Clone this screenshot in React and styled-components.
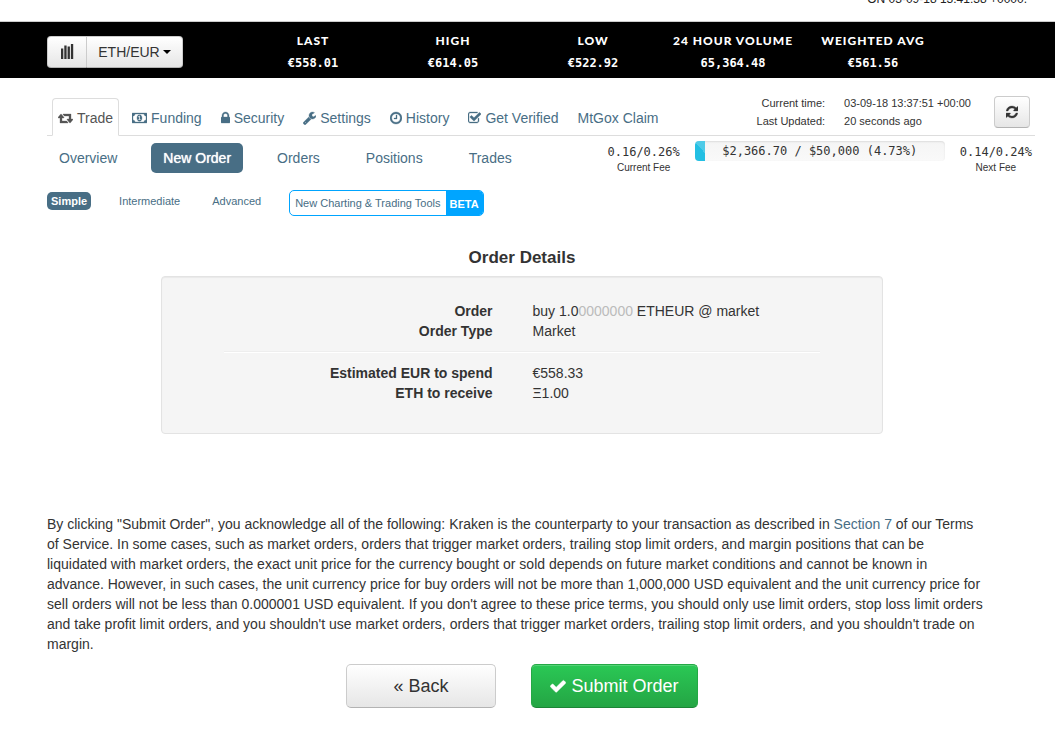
import React from 'react';
import styled, { createGlobalStyle, css } from 'styled-components';

const sans = '"Liberation Sans", Arial, sans-serif';
const mono = '"DejaVu Sans Mono", monospace';
const slate = '#486e85';

const GlobalStyle = createGlobalStyle`
  *, *::before, *::after { box-sizing: border-box; }
  body {
    margin: 0;
    background: #fff;
    color: #333;
    font: 14px/20px ${sans};
    overflow-x: hidden;
  }
  a { color: ${slate}; text-decoration: none; }
  button { font-family: inherit; color: inherit; cursor: pointer; }
`;

const icons = {
  retweet: [0, 1920, 'M1280 1504q0 13-9.5 22.5t-22.5 9.5h-960q-8 0-13.5-2t-9-7-5.5-8-3-11.5-1-11.5v-600h-192q-26 0-45-19t-19-45q0-24 15-41l320-384q19-22 49-22t49 22l320 384q15 17 15 41 0 26-19 45t-45 19h-192v384h576q16 0 25 11l160 192q7 10 7 21zm640-416q0 24-15 41l-320 384q-20 23-49 23t-49-23l-320-384q-15-17-15-41 0-26 19-45t45-19h192v-384h-576q-16 0-25-12l-160-192q-7-9-7-20 0-13 9.5-22.5t22.5-9.5h960q8 0 13.5 2t9 7 5.5 8 3 11.5 1 11.5v600h192q26 0 45 19t19 45z'],
  money: [0, 1920, 'M768 1152h384v-96h-128v-448h-114l-148 137 77 80q42-37 55-57h2v288h-128v96zm512-256q0 70-21 142t-59.5 134-101.5 101-138 39-138-39-101.5-101-59.5-134-21-142 21-142 59.5-134 101.5-101 138-39 138 39 101.5 101 59.5 134 21 142zm512 256v-512q-106 0-181-75t-75-181h-1152q0 106-75 181t-181 75v512q106 0 181 75t75 181h1152q0-106 75-181t181-75zm128-832v1152q0 26-19 45t-45 19h-1792q-26 0-45-19t-19-45v-1152q0-26 19-45t45-19h1792q26 0 45 19t19 45z'],
  lock: [320, 1152, 'M640 768h512v-192q0-106-75-181t-181-75-181 75-75 181v192zm832 96v576q0 40-28 68t-68 28h-960q-40 0-68-28t-28-68v-576q0-40 28-68t68-28h32v-192q0-184 132-316t316-132 316 132 132 316v192h32q40 0 68 28t28 68z'],
  wrench: [64, 1664, 'M448 1472q0-26-19-45t-45-19-45 19-19 45 19 45 45 19 45-19 19-45zm644-420l-682 682q-37 37-90 37-52 0-91-37l-106-108q-38-36-38-90 0-53 38-91l681-681q39 98 114.5 173.5t173.5 114.5zm634-435q0 39-23 106-47 134-164.5 217.5t-258.5 83.5q-185 0-316.5-131.5t-131.5-316.5 131.5-316.5 316.5-131.5q58 0 121.5 16.5t107.5 46.5q16 11 16 28t-16 28l-293 169v224l193 107q5-3 79-48.5t135.5-81 70.5-35.5q15 0 23.5 10t8.5 25z'],
  clock: [128, 1536, 'M1024 544v448q0 14-9 23t-23 9h-320q-14 0-23-9t-9-23v-64q0-14 9-23t23-9h224v-352q0-14 9-23t23-9h64q14 0 23 9t9 23zm416 352q0-148-73-273t-198-198-273-73-273 73-198 198-73 273 73 273 198 198 273 73 273-73 198-198 73-273zm224 0q0 209-103 385.5t-279.5 279.5-385.5 103-385.5-103-279.5-279.5-103-385.5 103-385.5 279.5-279.5 385.5-103 385.5 103 279.5 279.5 103 385.5z'],
  verified: [64, 1664, 'M1472 930v318q0 119-84.5 203.5t-203.5 84.5h-832q-119 0-203.5-84.5t-84.5-203.5v-832q0-119 84.5-203.5t203.5-84.5h832q63 0 117 25 15 7 18 23 3 17-9 29l-49 49q-10 10-23 10-3 0-9-2-23-6-45-6h-832q-66 0-113 47t-47 113v832q0 66 47 113t113 47h832q66 0 113-47t47-113v-254q0-13 9-22l64-64q10-10 23-10 6 0 12 3 20 8 20 29zm231-489l-814 814q-24 24-57 24t-57-24l-430-430q-24-24-24-57t24-57l110-110q24-24 57-24t57 24l263 263 647-647q24-24 57-24t57 24l110 110q24 24 24 57t-24 57z'],
  refresh: [128, 1536, 'M1639 1056q0 5-1 7-64 268-268 434.5t-478 166.5q-146 0-282.5-55t-243.5-157l-129 129q-19 19-45 19t-45-19-19-45v-448q0-26 19-45t45-19h448q26 0 45 19t19 45-19 45l-137 137q71 66 161 102t187 36q134 0 250-65t186-179q11-17 53-117 8-23 30-23h192q13 0 22.5 9.5t9.5 22.5zm25-800v448q0 26-19 45t-45 19h-448q-26 0-45-19t-19-45 19-45l138-138q-148-137-349-137-134 0-250 65t-186 179q-11 17-53 117-8 23-30 23h-199q-13 0-22.5-9.5t-9.5-22.5v-7q65-268 270-434.5t480-166.5q146 0 284 55.5t245 156.5l130-129q19-19 45-19t45 19 19 45z'],
  check: [96, 1600, 'M1671 566q0 40-28 68l-724 724-136 136q-28 28-68 28t-68-28l-136-136-362-362q-28-28-28-68t28-68l136-136q28-28 68-28t68 28l294 295 656-657q28-28 68-28t68 28l136 136q28 28 28 68z'],
};

function Icon({ name, size = 14 }) {
  const [x, width, path] = icons[name];
  return (
    <svg
      aria-hidden="true"
      height={size}
      width={Math.round((width / 1792) * size)}
      viewBox={`${x} 0 ${width} 1792`}
      fill="currentColor"
      stroke="currentColor"
      strokeWidth="40"
    >
      <path d={path} />
    </svg>
  );
}

const Notice = styled.div`
  height: 22px;
  padding-right: 28px;
  overflow: hidden;
  display: flex;
  justify-content: flex-end;
  align-items: flex-start;
  font-size: 12px;
  line-height: 16px;
  color: #222;
  border-bottom: 1px solid #ccc;

  span { margin-top: -9px; }
`;

const Ticker = styled.header`
  display: flex;
  align-items: center;
  height: 56px;
  padding: 3px 0 0 47px;
  background: #000;
`;

const ButtonGroup = styled.div`
  display: flex;
  width: 136px;
  margin-right: 60px;
`;

const softButton = css`
  border: 1px solid #ccc;
  border-bottom-color: #b3b3b3;
  background: linear-gradient(#fff, #e6e6e6);
  box-shadow: inset 0 1px 0 #fff;
`;

const PairButton = styled.button`
  ${softButton}
  display: flex;
  align-items: center;
  justify-content: center;
  gap: 3px;
  flex: ${(p) => (p.$grow ? '1' : '0 0 40px')};
  height: 32px;
  padding: 0;
  border-radius: ${(p) => (p.$grow ? '0 4px 4px 0' : '4px 0 0 4px')};
  border-left-width: ${(p) => (p.$grow ? '0' : '1px')};
  font-size: 14px;
`;

const Caret = styled.span`
  border: 4px solid transparent;
  border-top-color: #000;
  border-bottom: 0;
`;

const Stats = styled.dl`
  display: flex;
  margin: 0;
`;

const Stat = styled.div`
  width: 140px;
  text-align: center;
  color: #fff;
  font-weight: bold;
  line-height: 22px;

  dt {
    font-family: Lato, sans-serif;
    font-weight: 900;
    font-size: 12px;
    letter-spacing: 1px;
    white-space: nowrap;
  }
  dd {
    margin: 0;
    font-family: ${mono};
    font-size: 12px;
  }
`;

const TabBar = styled.div`
  display: flex;
  justify-content: space-between;
  align-items: flex-end;
  margin: 14px 20px 0 47px;
  height: 44px;
  border-bottom: 1px solid #ddd;
`;

const Tabs = styled.nav`
  display: flex;
  padding-left: 5px;
  margin-bottom: -1px;
`;

const Tab = styled.a`
  display: flex;
  align-items: center;
  gap: 4px;
  height: 38px;
  padding: 2px 5px 0;
  margin-right: 7px;
  border: 1px solid transparent;
  border-radius: 4px 4px 0 0;
  white-space: nowrap;

  ${(p) => p.$active && css`
    color: #555;
    background: #fff;
    border-color: #ddd;
    border-bottom-color: #fff;
  `}
`;

const Status = styled.div`
  display: flex;
  align-items: center;
  gap: 23px;
  padding-right: 5px;
  height: 46px;
`;

const Times = styled.dl`
  display: grid;
  grid-template-columns: auto auto;
  column-gap: 19px;
  margin: 0;
  font-size: 11px;
  line-height: 18px;

  dt { text-align: right; }
  dd { margin: 0; }
`;

const RefreshButton = styled.button`
  ${softButton}
  display: flex;
  align-items: center;
  justify-content: center;
  width: 36px;
  height: 32px;
  padding: 0;
  border-radius: 4px;
`;

const SubBar = styled.div`
  display: flex;
  justify-content: space-between;
  align-items: flex-start;
  margin: 7px 23px 0 47px;
`;

const Pills = styled.nav`
  display: flex;
  gap: 22px;
`;

const Pill = styled.a`
  padding: 5px 12px;
  border-radius: 5px;

  ${(p) => p.$active && css`
    color: #fff;
    background: ${slate};
    text-shadow: 0 0 1px #fff;
  `}
`;

const Fees = styled.div`
  display: flex;
  align-items: flex-start;
  gap: 15px;
  font-size: 10px;
  line-height: 13px;
  text-align: center;

  strong {
    display: block;
    font: 12px/18px ${mono};
  }
`;

const Meter = styled.div`
  position: relative;
  width: 250px;
  height: 20px;
  margin-top: -2px;
  border-radius: 4px;
  overflow: hidden;
  background: linear-gradient(#f5f5f5, #f9f9f9);
  box-shadow: inset 0 1px 2px rgba(0, 0, 0, 0.1);
  font: 12px/20px ${mono};
`;

const MeterFill = styled.div`
  position: absolute;
  inset: 0 auto 0 0;
  background: linear-gradient(45deg, #23bfe3 60%, #4fcbe8 60%);
`;

const Modes = styled.nav`
  display: flex;
  align-items: flex-start;
  margin: 16px 20px 0 47px;
  font-size: 11px;
`;

const Mode = styled.a`
  padding: 0 4px;
  margin: 2px 24px 0 0;
  line-height: 18px;
  border-radius: 5px;

  ${(p) => p.$active && css`
    color: #fff;
    background: ${slate};
    font-weight: bold;
  `}
`;

const BetaLink = styled.a`
  display: flex;
  height: 26px;
  line-height: 24px;
  border: 1px solid #00a5ff;
  border-radius: 5px;
  overflow: hidden;

  span { padding: 0 5px; }
  strong {
    padding: 0 4px;
    line-height: 26px;
    background: #00a5ff;
    color: #fff;
  }
`;

const Content = styled.main`
  padding: 32px 58px 40px 47px;
`;

const Title = styled.h1`
  margin: 0;
  font-size: 17px;
  line-height: 20px;
  text-align: center;
`;

const Well = styled.section`
  width: 76%;
  margin: 8px auto 80px;
  padding: 24px 62px 30px;
  border: 1px solid #e3e3e3;
  border-radius: 4px;
  background: #f5f5f5;
  box-shadow: inset 0 1px 1px rgba(0, 0, 0, 0.05);
`;

const Details = styled.dl`
  display: grid;
  grid-template-columns: 269fr 288fr;
  column-gap: 40px;
  margin: 0;

  & + & {
    margin-top: 10px;
    padding-top: 11px;
    border-top: 1px solid #eee;
    box-shadow: inset 0 1px 0 #fff;
  }
  dt { text-align: right; font-weight: bold; }
  dd { margin: 0; white-space: nowrap; }
`;

const Faded = styled.span`
  color: #bbb;
`;

const Terms = styled.p`
  margin: 0;
`;

const Actions = styled.div`
  display: flex;
  justify-content: center;
  gap: 35px;
  margin-top: 10px;
`;

const Action = styled.button`
  ${softButton}
  display: flex;
  align-items: center;
  justify-content: center;
  gap: 5px;
  width: ${(p) => (p.$primary ? '167px' : '150px')};
  height: 44px;
  padding: 0;
  border-radius: 5px;
  font-size: 18px;

  ${(p) => p.$primary && css`
    color: #fff;
    border-color: #25a845 #25a845 #1c8536;
    background: linear-gradient(#2ac855, #24a544);
    box-shadow: inset 0 1px 0 rgba(255, 255, 255, 0.2);
  `}
`;

const stats = [
  ['LAST', '€558.01'],
  ['HIGH', '€614.05'],
  ['LOW', '€522.92'],
  ['24 HOUR VOLUME', '65,364.48'],
  ['WEIGHTED AVG', '€561.56'],
];

const tabs = [
  ['Trade', 'retweet'],
  ['Funding', 'money'],
  ['Security', 'lock'],
  ['Settings', 'wrench'],
  ['History', 'clock'],
  ['Get Verified', 'verified'],
  ['MtGox Claim', null],
];

export default function App() {
  return (
    <>
      <GlobalStyle />
      <Notice><span>ON 03-09-18 13:41:38 +0000.</span></Notice>
      <Ticker>
        <ButtonGroup>
          <PairButton aria-label="Markets">
            <svg width="13" height="15" viewBox="0 0 13 15" fill="#333" aria-hidden="true">
              <path d="M0 4.5h2.3v10.5H0zM3.3 1.5h2.3v13.5H3.3zM6.6 2.5h2.3v12.5H6.6zM9.9 0h2.3v15H9.9z" />
            </svg>
          </PairButton>
          <PairButton $grow>ETH/EUR<Caret /></PairButton>
        </ButtonGroup>
        <Stats>
          {stats.map(([label, value]) => (
            <Stat key={label}><dt>{label}</dt><dd>{value}</dd></Stat>
          ))}
        </Stats>
      </Ticker>

      <TabBar>
        <Tabs>
          {tabs.map(([label, icon]) => (
            <Tab href="#" key={label} $active={label === 'Trade'}>
              {icon && <Icon name={icon} />}
              {label}
            </Tab>
          ))}
        </Tabs>
        <Status>
          <Times>
            <dt>Current time:</dt><dd>03-09-18 13:37:51 +00:00</dd>
            <dt>Last Updated:</dt><dd>20 seconds ago</dd>
          </Times>
          <RefreshButton aria-label="Refresh"><Icon name="refresh" /></RefreshButton>
        </Status>
      </TabBar>

      <SubBar>
        <Pills>
          {['Overview', 'New Order', 'Orders', 'Positions', 'Trades'].map((label) => (
            <Pill href="#" key={label} $active={label === 'New Order'}>{label}</Pill>
          ))}
        </Pills>
        <Fees>
          <div><strong>0.16/0.26%</strong>Current Fee</div>
          <Meter>
            <MeterFill style={{ width: '4%' }} />
            $2,366.70 / $50,000 (4.73%)
          </Meter>
          <div><strong>0.14/0.24%</strong>Next Fee</div>
        </Fees>
      </SubBar>

      <Modes>
        <Mode href="#" $active>Simple</Mode>
        <Mode href="#">Intermediate</Mode>
        <Mode href="#">Advanced</Mode>
        <BetaLink href="#"><span>New Charting &amp; Trading Tools</span><strong>BETA</strong></BetaLink>
      </Modes>

      <Content>
        <Title>Order Details</Title>
        <Well>
          <Details>
            <dt>Order</dt>
            <dd>buy 1.0<Faded>0000000</Faded> ETHEUR @ market</dd>
            <dt>Order Type</dt>
            <dd>Market</dd>
          </Details>
          <Details>
            <dt>Estimated EUR to spend</dt>
            <dd>€558.33</dd>
            <dt>ETH to receive</dt>
            <dd>Ξ1.00</dd>
          </Details>
        </Well>
        <Terms>
          By clicking "Submit Order", you acknowledge all of the following: Kraken is the counterparty to your
          transaction as described in <a href="#">Section 7</a> of our Terms<br />
          of Service. In some cases, such as market orders, orders that trigger market orders, trailing stop limit
          orders, and margin positions that can be<br />
          liquidated with market orders, the exact unit price for the currency bought or sold depends on future
          market conditions and cannot be known in<br />
          advance. However, in such cases, the unit currency price for buy orders will not be more than 1,000,000
          USD equivalent and the unit currency price for<br />
          sell orders will not be less than 0.000001 USD equivalent. If you don't agree to these price terms, you
          should only use limit orders, stop loss limit orders<br />
          and take profit limit orders, and you shouldn't use market orders, orders that trigger market orders,
          trailing stop limit orders, and you shouldn't trade on<br />
          margin.
        </Terms>
        <Actions>
          <Action>« Back</Action>
          <Action $primary><Icon name="check" size={18} />Submit Order</Action>
        </Actions>
      </Content>
    </>
  );
}
